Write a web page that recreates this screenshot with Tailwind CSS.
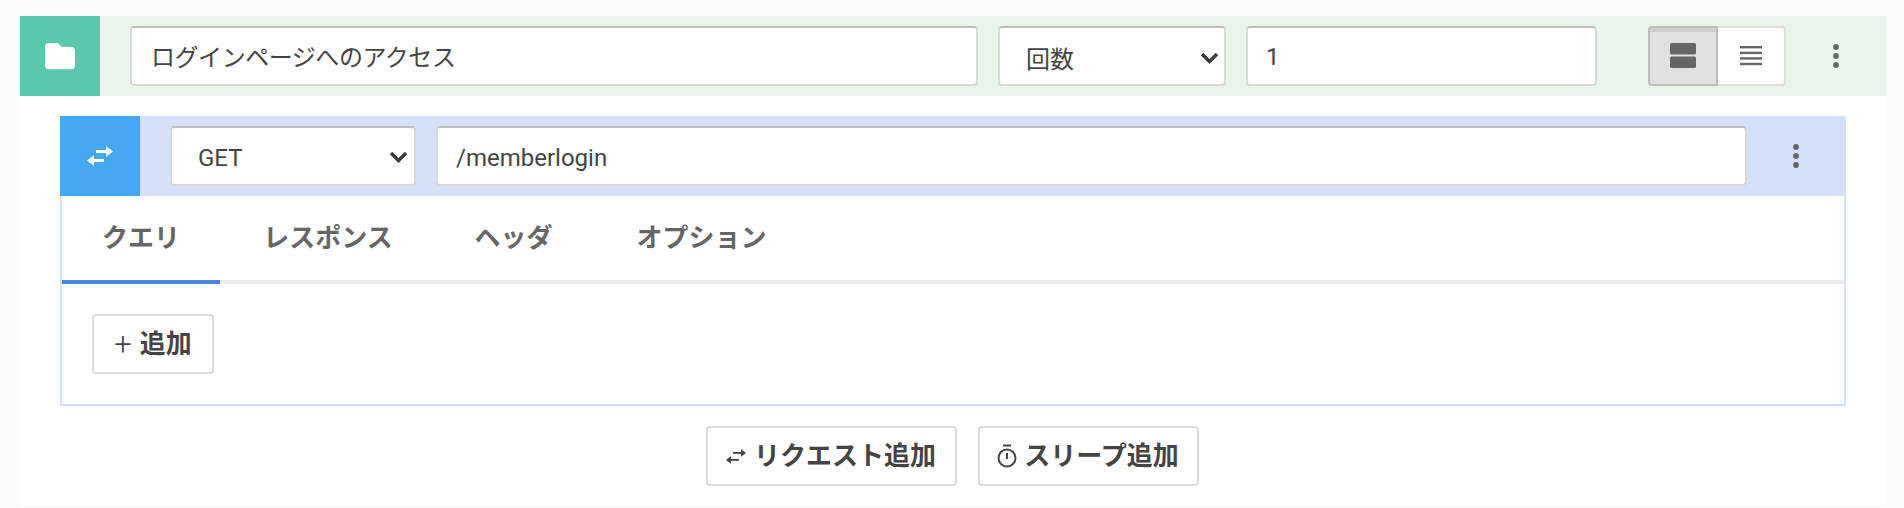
<!DOCTYPE html>
<html lang="ja">
<head>
<meta charset="utf-8">
<script src="https://cdn.jsdelivr.net/npm/@tailwindcss/browser@4"></script>
</head>
<body class="bg-[#fafafa] overflow-hidden font-['Roboto','Noto_Sans_CJK_JP',sans-serif] text-[#444]">
<div class="ml-5 mt-4 w-[1866px] h-[490px] bg-white">
  <div class="flex h-20 items-center bg-[#e7f5ea]">
    <div class="flex h-20 w-20 shrink-0 items-center justify-center bg-[#5bc8ad]">
      <svg class="h-[30px] w-[30px]" viewBox="0 0 512 512" fill="#fff"><path d="M64 480H448c35.3 0 64-28.7 64-64V160c0-35.3-28.7-64-64-64H288c-10.1 0-19.6-4.7-25.6-12.8L243.2 57.6C231.1 41.5 212.1 32 192 32H64C28.7 32 0 60.7 0 96V416c0 35.3 28.7 64 64 64z"/></svg>
    </div>
    <input value="ログインページへのアクセス" class="ml-[30px] h-[60px] w-[848px] rounded border-2 border-[#d8d8d8] border-t-[#bdbdbd] bg-white pb-[2px] pl-[19px] pr-[19px] text-2xl tracking-[-0.45px] text-[#444] outline-none">
    <div class="relative ml-[20px] h-[60px] w-[228px]">
      <select class="h-full w-full appearance-none rounded border-2 border-[#d8d8d8] border-t-[#bdbdbd] bg-white pl-[26px] pt-[8px] text-2xl text-[#444] outline-none"><option>回数</option></select>
      <svg class="pointer-events-none absolute right-[7px] top-[26px] h-[12px] w-[19px]" viewBox="0 0 18 12" fill="none" stroke="#3a3a3a" stroke-width="3.4"><path d="M1.500 2 9 9.500 16.500 2"/></svg>
    </div>
    <input value="1" class="ml-[20px] h-[60px] w-[351px] rounded border-2 border-[#d8d8d8] border-t-[#bdbdbd] bg-white px-[18px] pt-[2px] text-2xl text-[#444] outline-none">
    <div class="ml-[51px] flex h-[60px]">
      <button class="flex h-[60px] w-[70px] items-center justify-center rounded-l border-2 border-[#bdbdbd] bg-[#e1e1e1] shadow-[inset_0_4px_0_#d0d0d0]">
        <svg class="h-[26px] w-[26px]" viewBox="0 0 26 26" fill="#666"><rect y="0" width="26" height="11.500" rx="1.500"/><rect y="13.500" width="26" height="11.500" rx="1.500"/></svg>
      </button>
      <button class="flex h-[60px] w-[68px] items-center justify-center rounded-r border-2 border-l-0 border-[#dcdcdc] bg-white">
        <svg class="h-[20px] w-[22px]" viewBox="0 0 22 20" fill="#666"><rect y="0" width="22" height="2.400"/><rect y="5.700" width="22" height="2.400"/><rect y="11.200" width="22" height="2.400"/><rect y="16.800" width="22" height="2.400"/></svg>
      </button>
    </div>
    <svg class="ml-[47px] h-[24px] w-[6px]" viewBox="0 0 6 24" fill="#666"><circle cx="3" cy="3" r="2.900"/><circle cx="3" cy="12" r="2.900"/><circle cx="3" cy="21" r="2.900"/></svg>
  </div>

  <div class="mx-10 mt-5">
    <div class="flex h-20 items-center bg-[#d4e0f8]">
      <div class="flex h-20 w-20 shrink-0 items-center justify-center bg-[#46a8f5]">
        <svg class="h-[20px] w-[26px]" viewBox="0 0 26 20" fill="#fff"><rect x="9" y="4" width="12" height="3"/><path d="M19 0 26 5.500 19 11z"/><rect x="5" y="13" width="12" height="3"/><path d="M7 9 0 14.500 7 20z"/></svg>
      </div>
      <div class="relative ml-[30px] h-[60px] w-[246px]">
        <select class="h-full w-full appearance-none rounded border-2 border-[#d8d8d8] border-t-[#bdbdbd] bg-white pl-[26px] pt-[4px] text-2xl text-[#444] outline-none"><option>GET</option></select>
        <svg class="pointer-events-none absolute right-[8px] top-[25px] h-[12px] w-[19px]" viewBox="0 0 18 12" fill="none" stroke="#3a3a3a" stroke-width="3.4"><path d="M1.500 2 9 9.500 16.500 2"/></svg>
      </div>
      <input value="/memberlogin" class="ml-[20px] h-[60px] w-[1311px] rounded border-2 border-[#d8d8d8] border-t-[#bdbdbd] bg-white px-[18px] pt-[4px] text-2xl text-[#444] outline-none">
      <svg class="ml-[46px] h-[24px] w-[6px]" viewBox="0 0 6 24" fill="#666"><circle cx="3" cy="3" r="2.900"/><circle cx="3" cy="12" r="2.900"/><circle cx="3" cy="21" r="2.900"/></svg>
    </div>
    <div class="h-[210px] border-2 border-t-0 border-[#d4e0f8]">
      <div class="flex h-[88px] border-b-4 border-[#ebebeb] text-[26px] font-bold text-[#666]">
        <div class="-mb-1 flex w-[158px] items-center justify-center border-b-4 border-[#4a86e8]">クエリ</div>
        <div class="flex w-[216px] items-center justify-center">レスポンス</div>
        <div class="flex w-[155px] items-center justify-center">ヘッダ</div>
        <div class="flex w-[221px] items-center justify-center">オプション</div>
      </div>
      <div class="pl-[30px] pt-[30px]">
        <button class="flex h-[60px] w-[122px] items-center justify-center gap-[8px] rounded border-2 border-[#dcdcdc] bg-white text-[26px] font-bold text-[#444]"><span class="text-[31px] font-light leading-none">+</span>追加</button>
      </div>
    </div>
    <div class="mt-5 flex justify-center gap-[21px] pr-[2px]">
      <button class="flex h-[60px] w-[251px] items-center justify-center gap-[8px] rounded border-2 border-[#dcdcdc] bg-white text-[26px] font-bold text-[#444]">
        <svg class="h-[15px] w-[20px]" viewBox="0 0 20 15" fill="#444"><rect x="7" y="3" width="9" height="1.800"/><path d="M15 0 20 3.900 15 7.800z"/><rect x="4" y="10" width="9" height="1.800"/><path d="M5 7 0 10.900 5 14.800z"/></svg>リクエスト追加
      </button>
      <button class="flex h-[60px] w-[221px] items-center justify-center gap-[7px] rounded border-2 border-[#dcdcdc] bg-white text-[26px] font-bold text-[#444]">
        <svg class="h-[24px] w-[20px]" viewBox="0 0 20 24" fill="none" stroke="#444" stroke-width="2"><path d="M6 1.500h8"/><circle cx="10" cy="14" r="8.500"/><path d="M10 9v6"/></svg>スリープ追加
      </button>
    </div>
  </div>
</div>
</body>
</html>
